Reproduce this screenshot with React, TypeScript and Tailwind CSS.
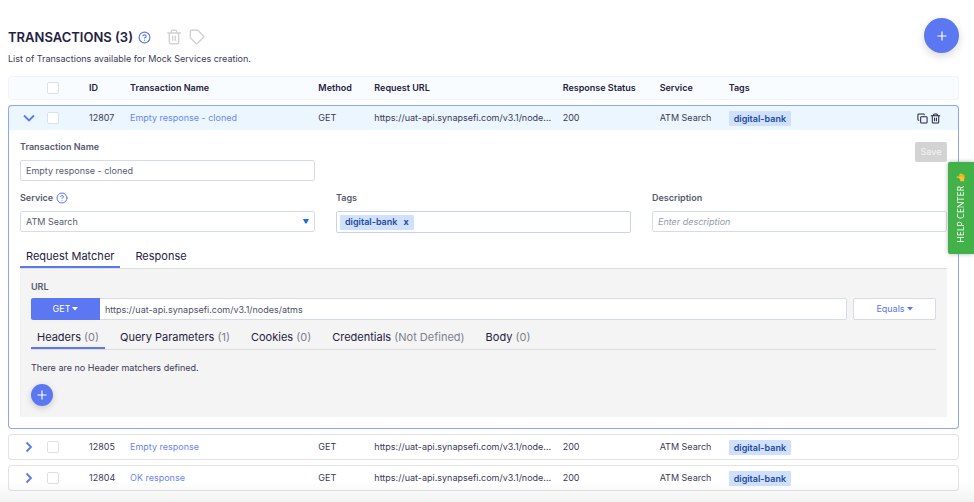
import type { ReactNode } from 'react'
import { CircleQuestionMark, Copy, Plus } from 'lucide-react'

const URL_BASE = 'https://uat-api.synapsefi.com/v3.1/nodes/atms'

const ROWS = [
  { id: '12807', name: 'Empty response - cloned', open: true },
  { id: '12805', name: 'Empty response', open: false },
  { id: '12804', name: 'OK response', open: false },
]

const MATCHERS = [
  { name: 'Headers', count: '(0)' },
  { name: 'Query Parameters', count: '(1)' },
  { name: 'Cookies', count: '(0)' },
  { name: 'Credentials', count: '(Not Defined)' },
  { name: 'Body', count: '(0)' },
]

export default function App() {
  return (
    <div className="min-h-screen bg-white pt-[18px] pr-[15px] pb-2 pl-2 font-['Inter',sans-serif] text-[9px] leading-[14px] text-[#3b3a55]">
      <header className="flex items-start justify-between">
        <div>
          <div className="mt-[10px] flex h-[18px] items-center">
            <h1 className="text-[13px] font-semibold text-[#25213f]">TRANSACTIONS (3)</h1>
            <button aria-label="Help" className="ml-[5px] text-[#5b78f2]">
              <CircleQuestionMark size={13} strokeWidth={2.2} />
            </button>
            <button aria-label="Delete selected" className="ml-[15px] text-[#d2d2d2]">
              <Trash className="size-4" />
            </button>
            <button aria-label="Tag selected" className="ml-[7px] text-[#d2d2d2]">
              <svg viewBox="0 0 24 24" className="size-4" fill="none" stroke="currentColor" strokeWidth="2.2" strokeLinejoin="round">
                <path d="M2 4a2 2 0 0 1 2-2h8.500a2 2 0 0 1 1.400.6l7.500 7.500a2 2 0 0 1 0 2.800l-8.500 8.500a2 2 0 0 1-2.800 0L2.600 13.900A2 2 0 0 1 2 12.500z" />
              </svg>
            </button>
          </div>
          <p className="mt-[6px]">List of Transactions available for Mock Services creation.</p>
        </div>
        <button
          aria-label="Add transaction"
          className="flex size-[35px] items-center justify-center rounded-full bg-[#5b78f2] text-white shadow-[0_3px_8px_rgba(0,0,0,0.16)]"
        >
          <Plus size={14} strokeWidth={2} />
        </button>
      </header>

      <table className="mt-[10px] w-full table-fixed border-separate border-spacing-0 text-left">
        <colgroup>
          <col className="w-[39px]" />
          <col className="w-[42px]" />
          <col className="w-[41px]" />
          <col />
          <col className="w-[56px]" />
          <col />
          <col className="w-[97px]" />
          <col className="w-[69px]" />
          <col />
          <col className="w-[42px]" />
        </colgroup>
        <thead>
          <tr className="h-6 text-[#25213f] *:border-y *:border-[#f0f4f9] *:bg-[#f9fcff] *:font-semibold">
            <td className="rounded-l border-l" />
            <th>
              <Check label="Select all" />
            </th>
            <th>ID</th>
            <th>Transaction Name</th>
            <th>Method</th>
            <th>Request URL</th>
            <th>Response Status</th>
            <th>Service</th>
            <th>Tags</th>
            <td className="rounded-r border-r" />
          </tr>
        </thead>
        {ROWS.map((row) => (
          <tbody key={row.id}>
            <tr className="h-[5px]">
              <td colSpan={10} />
            </tr>
            <tr
              className={
                row.open
                  ? 'h-[25px] *:border-t *:border-[#8fa5f8] *:bg-[#ebf6ff]'
                  : 'h-[26px] *:border-y *:border-[#e3e3e3]'
              }
            >
              <td className={row.open ? 'rounded-tl border-l' : 'rounded-l border-l'}>
                <button aria-label="Toggle details" className="ml-[14px] block text-[#5b78f2]">
                  <Chevron open={row.open} />
                </button>
              </td>
              <td>
                <Check label={`Select ${row.id}`} />
              </td>
              <td>{row.id}</td>
              <td>
                <a href="#" className="text-[#6b86f3]">
                  {row.name}
                </a>
              </td>
              <td>GET</td>
              <td className="whitespace-nowrap">{URL_BASE.slice(0, 39)}...</td>
              <td>200</td>
              <td>ATM Search</td>
              <td>
                <span className="inline-block rounded-[1px] bg-[#cfe1ff] px-[5px] align-middle leading-[15px] font-semibold text-[#1f4b99]">
                  digital-bank
                </span>
              </td>
              <td className={row.open ? 'rounded-tr border-r' : 'rounded-r border-r'}>
                {row.open && (
                  <div className="flex gap-[2px] text-[#25213f]">
                    <button aria-label="Clone">
                      <Copy size={11} strokeWidth={2.2} />
                    </button>
                    <button aria-label="Delete">
                      <Trash className="size-[11px]" />
                    </button>
                  </div>
                )}
              </td>
            </tr>
            {row.open && (
              <tr>
                <td colSpan={10} className="rounded-b border-x border-b border-[#8fa5f8] px-[11px] pt-[10px] pb-[11px]">
                  <Details />
                </td>
              </tr>
            )}
          </tbody>
        ))}
      </table>

      {/* soft shade along the window's bottom edge */}
      <div className="pointer-events-none fixed inset-x-0 bottom-0 h-5 bg-linear-to-b from-transparent to-black/5" />

      <button className="fixed top-[162px] right-0 flex h-[92px] w-[26px] rotate-180 items-center justify-center gap-[3px] rounded-r-[2px] bg-[#43b149] font-['Open_Sans',sans-serif] font-medium text-white shadow-[0_0_4px_rgba(0,0,0,0.3)] [writing-mode:vertical-rl]">
        HELP CENTER
        <Thumb />
      </button>
    </div>
  )
}

function Details() {
  return (
    <>
      <div className="grid grid-cols-3 gap-x-[21px] gap-y-[10px]">
        <Field label="Transaction Name" id="name">
          <input id="name" defaultValue="Empty response - cloned" className={CONTROL} />
        </Field>
        <button
          disabled
          className="col-start-3 mt-[2px] h-5 w-8 justify-self-end rounded-[2px] bg-[#d3d3d3] text-[#f4f4f4]"
        >
          Save
        </button>
        <Field label="Service" id="service" help>
          <div className="relative">
            <select id="service" className={`${CONTROL} appearance-none`}>
              <option>ATM Search</option>
            </select>
            <svg viewBox="0 0 6 5" className="pointer-events-none absolute top-2 right-[6px] h-[5px] w-[6px] fill-[#1e6be6]">
              <path d="M0 0h6L3.6 4.5H2.4z" />
            </svg>
          </div>
        </Field>
        <Field label="Tags" id="tags">
          <div className="flex h-[22px] items-center rounded-[2px] border border-[#c6d3ea] bg-white px-[3px]">
            <span className="flex h-[15px] items-center gap-[6px] rounded-[1px] bg-[#cfe1ff] px-[5px] font-semibold text-[#1f4b99]">
              digital-bank
              <button aria-label="Remove digital-bank" className="font-bold">
                x
              </button>
            </span>
            <input id="tags" className="min-w-0 flex-1 outline-none" />
          </div>
        </Field>
        <Field label="Description" id="description">
          <input id="description" placeholder="Enter description" className={`${CONTROL} placeholder:text-[#9499ab] placeholder:italic`} />
        </Field>
      </div>

      <div role="tablist" className="mt-[11px] flex gap-[9px] border-b border-[#dedede] text-[11px] text-[#25213f]">
        <Tab active>Request Matcher</Tab>
        <Tab>Response</Tab>
      </div>

      <section className="bg-[#f4f4f4] px-[11px] pt-[11px] pb-[11px]">
        <label htmlFor="url" className="block font-semibold text-[#565b6e]">
          URL
        </label>
        <div className="mt-1 flex">
          <Dropdown label="Method" value="GET" className="w-[69px] rounded-l-[2px] bg-[#5b78f2] text-white" />
          <input
            id="url"
            defaultValue={URL_BASE}
            className="h-[22px] min-w-0 flex-1 rounded-r-[2px] border border-l-0 border-[#d5dce9] bg-white px-[5px] text-[#4d5264]"
          />
          <Dropdown
            label="Comparison"
            value="Equals"
            className="ml-[6px] w-[83px] rounded-[2px] border border-[#d5dce9] bg-white text-[#5b78f2]"
          />
        </div>
        <div role="tablist" className="mt-[5px] flex gap-[9px] border-b border-[#dedede] text-[11px] text-[#25213f]">
          {MATCHERS.map((m, i) => (
            <Tab key={m.name} active={i === 0}>
              {m.name} <span className="text-[#7d7f8c]">{m.count}</span>
            </Tab>
          ))}
        </div>
        <p className="mt-[11px]">There are no Header matchers defined.</p>
        <button
          aria-label="Add header matcher"
          className="mt-[9px] flex size-[22px] items-center justify-center rounded-full bg-[#5b78f2] text-white shadow-[0_2px_6px_rgba(0,0,0,0.18)]"
        >
          <Plus size={14} strokeWidth={2} />
        </button>
      </section>
    </>
  )
}

const CONTROL = 'block h-[21px] w-full rounded-[2px] border border-[#d5dce9] bg-white px-[5px] text-[#565b6e] outline-none'

function Field({ label, id, help, children }: { label: string; id: string; help?: boolean; children: ReactNode }) {
  return (
    <div>
      <div className="mb-[6px] flex h-[14px] items-center gap-[3px]">
        <label htmlFor={id} className="font-semibold text-[#565b6e]">
          {label}
        </label>
        {help && <CircleQuestionMark size={12} className="text-[#5b78f2]" />}
      </div>
      {children}
    </div>
  )
}

function Tab({ active, children }: { active?: boolean; children: ReactNode }) {
  return (
    <button
      role="tab"
      aria-selected={!!active}
      className={
        active
          ? 'h-6 border-b-2 border-[#5b78f2] px-[6px] pt-[2px] whitespace-nowrap'
          : 'h-6 border-b-2 border-transparent px-[6px] pt-[2px] whitespace-nowrap'
      }
    >
      {children}
    </button>
  )
}

function Dropdown({ label, value, className }: { label: string; value: string; className: string }) {
  return (
    <div className={`flex h-[22px] items-center justify-center gap-[2px] ${className}`}>
      <select aria-label={label} className="field-sizing-content appearance-none outline-none">
        <option>{value}</option>
      </select>
      <svg viewBox="0 0 6 5" className="h-[5px] w-[6px]" fill="currentColor">
        <path d="M0 0h6L3 3.500z" />
      </svg>
    </div>
  )
}

function Check({ label }: { label: string }) {
  return (
    <input
      type="checkbox"
      aria-label={label}
      className="block size-3 appearance-none rounded-[2px] border border-[#dbe0ea] bg-white"
    />
  )
}

function Chevron({ open }: { open: boolean }) {
  return (
    <svg viewBox="0 0 12 12" className="size-3" fill="none" stroke="currentColor" strokeWidth="1.800">
      <path d={open ? 'M1 3.500l5 5 5-5' : 'M3.500 1.500L8 6l-4.500 4.500'} />
    </svg>
  )
}

function Trash({ className }: { className: string }) {
  return (
    <svg
      viewBox="0 0 24 24"
      className={className}
      fill="none"
      stroke="currentColor"
      strokeWidth="2.2"
      strokeLinecap="round"
      strokeLinejoin="round"
    >
      <path d="M2.500 6h19M5 6v14a2 2 0 0 0 2 2h10a2 2 0 0 0 2-2V6M8 6V4a2 2 0 0 1 2-2h4a2 2 0 0 1 2 2v2M10 11v6M14 11v6" />
    </svg>
  )
}

function Thumb() {
  return (
    <svg viewBox="0 0 24 24" className="size-[9px] rotate-90">
      <path
        fill="#fbc02d"
        d="M2 11h5l4-5V2.500c0-2 4-1.500 4 1.500 0 2-.8 3.500-1 5h6c3 0 3 3.500 1 4 1.500 1 1 3-.5 3.500 1 1 .5 3-1 3.200.5 1.300-.5 2.800-2 2.800h-7c-2 0-3-1-4.500-1H2z"
      />
      <path fill="none" stroke="#d98c10" strokeWidth="1.200" d="M14 13h6M14 16.500h6M14 19.700h5" />
    </svg>
  )
}
